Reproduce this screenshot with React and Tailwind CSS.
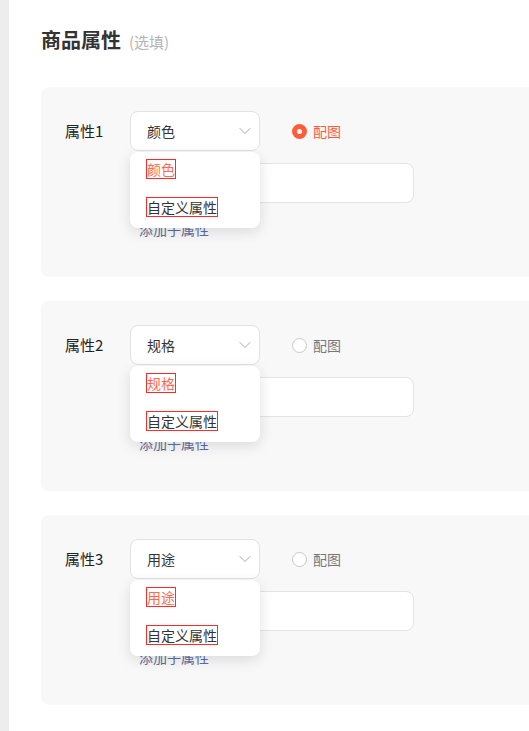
import React from "react";
import { ChevronDown } from "lucide-react";

const attrs = [
  { label: "属性1", value: "颜色", checked: true },
  { label: "属性2", value: "规格", checked: false },
  { label: "属性3", value: "用途", checked: false },
];

// --- Satu kartu atribut ---
const AttrCard = ({ label, value, checked }) => (
  <div className="bg-[#f8f8f8] rounded-lg h-[190px] pt-6 pl-6 mr-[-40px]">
    <div className="flex items-center h-10">
      <span className="w-[65px] text-[15px] text-[#222]">{label}</span>
      <div className="relative z-10">
        <div className="w-[130px] h-10 bg-white border border-[#e2e2e2] rounded-lg flex items-center justify-between pl-4 pr-1 text-sm text-[#333]">
          <span>{value}</span>
          <ChevronDown size={20} strokeWidth={1} className="text-[#999]" />
        </div>
        {/* dropdown */}
        <div className="absolute left-0 top-[41px] w-[130px] bg-white rounded-lg shadow-[0_4px_14px_rgba(0,0,0,0.12)] text-sm">
          <div className="h-[38px] flex items-center pl-[17px] pb-1">
            <span className="outline outline-1 outline-[#ff2a2a] text-[#ff6a4d] leading-[18px]">{value}</span>
          </div>
          <div className="h-[38px] flex items-center pl-[17px] pb-1">
            <span className="outline outline-1 outline-[#ff2a2a] text-[#333] leading-[18px]">自定义属性</span>
          </div>
        </div>
      </div>
      <div className="flex items-center ml-8 gap-1.5">
        {checked ? (
          <span className="w-[15px] h-[15px] rounded-full border-[5px] border-[#ff5c3c] bg-white" />
        ) : (
          <span className="w-[15px] h-[15px] rounded-full border border-[#c8c8c8] bg-white" />
        )}
        <span className={`text-sm ${checked ? "text-[#ff5c3c]" : "text-[#777]"}`}>配图</span>
      </div>
    </div>
    <div className="ml-[65px] mt-3 w-[284px] h-10 bg-white border border-[#e4e4e4] rounded-lg" />
    <div className="ml-[74px] mt-4 text-sm leading-5 text-[#5f6d9c]">添加子属性</div>
  </div>
);

export default function App() {
  return (
    <div
      className="flex h-[731px] overflow-hidden bg-white"
      style={{ fontFamily: '"Noto Sans CJK SC", "Noto Sans", sans-serif' }}
    >
      <div className="w-[9px] bg-[#ededed] shrink-0" />
      <div className="flex-1 pl-8 pt-[26px]">
        <div className="flex items-baseline gap-2 h-7 mb-[33px]">
          <span className="text-xl font-bold text-[#333] leading-7">商品属性</span>
          <span className="text-[15px] text-[#b5b5b5]">(选填)</span>
        </div>
        <div className="flex flex-col gap-6">
          {attrs.map((a) => (
            <AttrCard key={a.label} {...a} />
          ))}
        </div>
      </div>
    </div>
  );
}
